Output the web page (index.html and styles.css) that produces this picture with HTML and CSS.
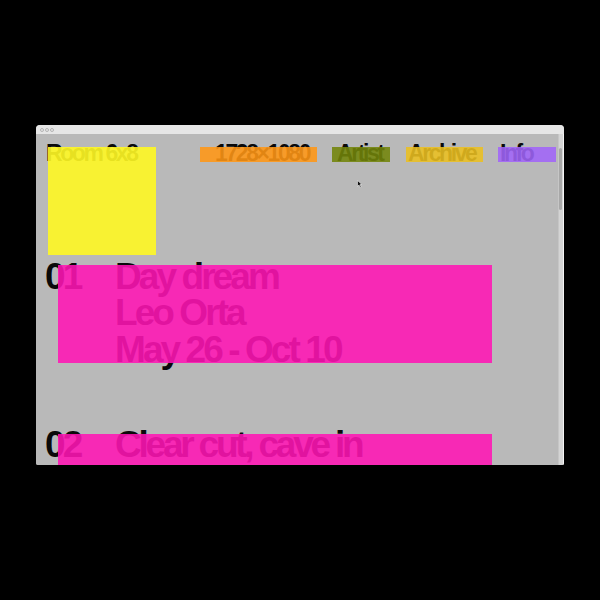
FILE: index.html
```html
<!DOCTYPE html>
<html lang="en">
<head>
<meta charset="utf-8">
<title>Room 6x8</title>
<link rel="stylesheet" href="styles.css">
</head>
<body>
<div class="window">
  <div class="titlebar">
    <span class="dot"></span><span class="dot"></span><span class="dot"></span>
  </div>
  <div class="viewport">
    <div class="content">
      <header class="nav">
        <span class="brand">Room 6x8</span>
        <span>1728×1080</span>
        <span>Artist</span>
        <span>Archive</span>
        <span>Info</span>
      </header>
      <ol class="list">
        <li class="row">
          <span class="num">01</span>
          <div class="meta">
            <div>Day dream</div>
            <div>Leo Orta</div>
            <div>May 26 - Oct 10</div>
          </div>
        </li>
        <li class="row">
          <span class="num">02</span>
          <div class="meta">
            <div class="title-tight">Clear cut, cave in</div>
          </div>
        </li>
      </ol>
      <div class="box box-yellow"></div>
      <div class="box box-orange"></div>
      <div class="box box-olive"></div>
      <div class="box box-gold"></div>
      <div class="box box-violet"></div>
      <div class="box box-pink box-pink-1"></div>
      <div class="box box-pink box-pink-2"></div>
      <svg class="cursor" width="6" height="8" viewBox="0 0 6 8"><path d="M0.5 0.5 L0.5 6.5 L2 5 L3.2 7.5 L4.2 7 L3 4.6 L5 4.6 Z" fill="#111" stroke="#eee" stroke-width="0.6"/></svg>
    </div>
    <div class="scrollbar"><div class="thumb"></div></div>
  </div>
</div>
</body>
</html>
```

FILE: styles.css
```css
* { box-sizing: border-box; }

html, body {
  margin: 0;
  background: #000;
}

body {
  width: 600px;
  height: 600px;
  overflow: hidden;
  padding: 125px 0 0 36px;
  font-family: "Liberation Sans", Arial, sans-serif;
  color: #0a0a0a;
}

.window {
  width: 528px;
  height: 340px;
  border-radius: 4px 4px 2px 2px;
  overflow: hidden;
  background: #b9b9b9;
  display: flex;
  flex-direction: column;
}

.titlebar {
  height: 9px;
  flex: none;
  background: #e6e6e6;
  display: flex;
  align-items: center;
  gap: 1px;
  padding-left: 4px;
}

.dot {
  width: 4px;
  height: 4px;
  border-radius: 50%;
  border: 1px solid #b4b4b4;
}

.viewport {
  flex: 1;
  display: flex;
  min-height: 0;
}

.content {
  position: relative;
  flex: 1;
  overflow: hidden;
  background: #b9b9b9;
}

.scrollbar {
  width: 6px;
  flex: none;
  background: #d4d4d4;
  border-left: 1px solid #c6c6c6;
  border-right: 1px solid #f4f4f4;
  padding-top: 14px;
}

.thumb {
  width: 3px;
  height: 62px;
  background: #a8a8a8;
  border-radius: 2px;
}

.nav {
  display: grid;
  grid-template-columns: 169px 122px 71px 92px auto;
  padding: 8px 0 0 10px;
  font-size: 23px;
  line-height: 23px;
  font-weight: 700;
  letter-spacing: -0.105em;
  white-space: nowrap;
}

.list {
  list-style: none;
  margin: 93.5px 0 0;
  padding: 0;
  font-size: 37px;
  line-height: 36.7px;
  font-weight: 700;
  letter-spacing: -0.079em;
  white-space: nowrap;
}

.title-tight {
  letter-spacing: -0.087em;
}

.row {
  display: grid;
  grid-template-columns: 70px auto;
  padding-left: 9px;
  margin-bottom: 58.6px;
}

.box {
  position: absolute;
}

.box-yellow { left: 12px; top: 13px; width: 108px; height: 108px; background: rgba(255, 248, 35, 0.9); }
.box-orange { left: 164px; top: 13px; width: 117px; height: 15px; background: rgba(255, 150, 20, 0.88); }
.box-olive  { left: 296px; top: 13px; width: 58px;  height: 15px; background: rgba(114, 132, 9, 0.88); }
.box-gold   { left: 370px; top: 13px; width: 77px;  height: 15px; background: rgba(234, 191, 32, 0.88); }
.box-violet { left: 462px; top: 13px; width: 58px;  height: 15px; background: rgba(160, 100, 248, 0.88); }

.box-pink { left: 22px; width: 434px; background: rgba(255, 20, 180, 0.88); }
.box-pink-1 { top: 131px; height: 98px; }
.box-pink-2 { top: 300px; height: 60px; }

.cursor {
  position: absolute;
  left: 321px;
  top: 46px;
}
```
